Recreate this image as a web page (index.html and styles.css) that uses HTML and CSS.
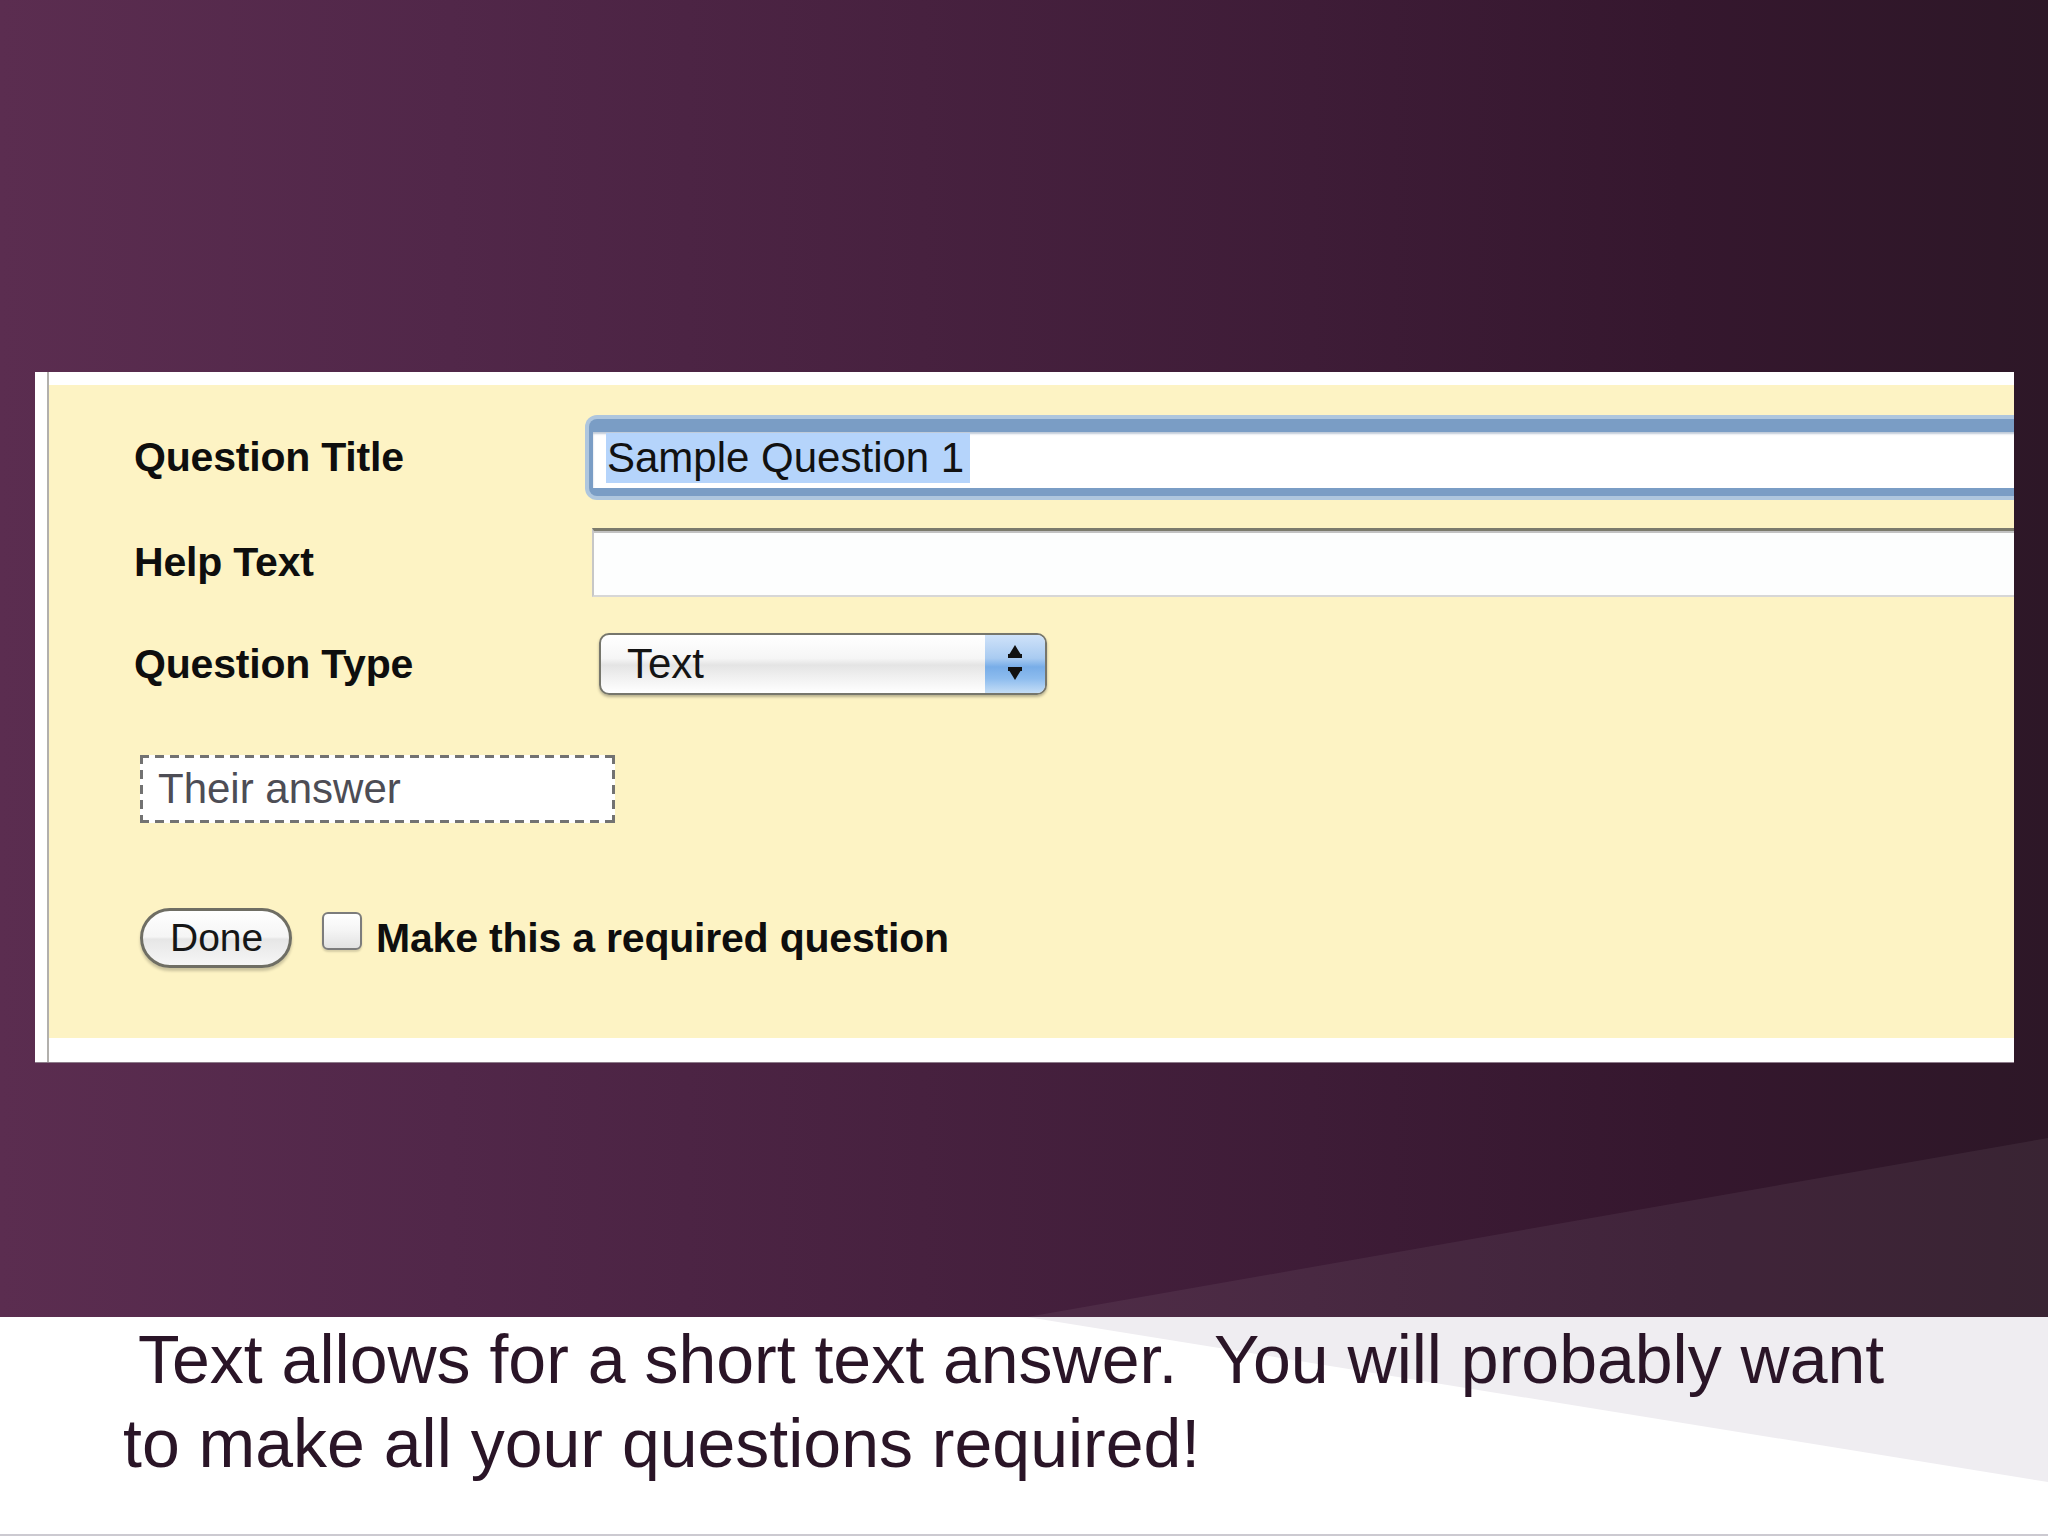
FILE: index.html
```html
<!DOCTYPE html>
<html>
<head>
<meta charset="utf-8">
<title>Question editor</title>
<link rel="stylesheet" href="styles.css">
</head>
<body>
<div class="slide">
  <div class="top">
    <div class="panel">
      <div class="sheet">
        <div class="editor">
          <div class="row row-title">
            <div class="label">Question Title</div>
            <div class="control">
              <div class="field field-focus"><span class="sel">Sample Question 1</span></div>
            </div>
          </div>
          <div class="row row-help">
            <div class="label">Help Text</div>
            <div class="control">
              <div class="field field-plain"></div>
            </div>
          </div>
          <div class="row row-type">
            <div class="label">Question Type</div>
            <div class="control">
              <div class="select">
                <span class="select-value">Text</span>
                <span class="select-arrows">
                  <svg width="60" height="58" viewBox="0 0 60 58" aria-hidden="true">
                    <polygon points="30,10 24.5,19 35.5,19" fill="#111"/>
                    <rect x="23" y="19" width="14" height="4" fill="#111"/>
                    <rect x="23" y="32" width="14" height="4" fill="#111"/>
                    <polygon points="24.5,36 35.5,36 30,45" fill="#111"/>
                  </svg>
                </span>
              </div>
            </div>
          </div>
          <div class="answer">Their answer</div>
          <div class="actions">
            <span class="btn">Done</span>
            <span class="checkbox"></span>
            <span class="req">Make this a required question</span>
          </div>
        </div>
      </div>
    </div>
  </div>
  <svg class="wedge" width="2048" height="1536" viewBox="0 0 2048 1536" aria-hidden="true">
    <polygon points="1027,1317 2048,1138 2048,1317" fill="#ffffff" fill-opacity="0.06"/>
    <polygon points="1027,1317 2048,1317 2048,1482" fill="#efedf1"/>
  </svg>
  <p class="caption">Text allows for a short text answer.&nbsp; You will probably want<br>to make all your questions required!</p>
</div>
</body>
</html>
```

FILE: styles.css
```css
html, body {
  margin: 0;
  padding: 0;
}

body {
  width: 2048px;
  height: 1536px;
  overflow: hidden;
  background: #ffffff;
  font-family: "Liberation Sans", Arial, sans-serif;
}

.slide {
  position: relative;
  width: 2048px;
  height: 1536px;
  background: #ffffff;
}

.top {
  height: 1317px;
  box-sizing: border-box;
  padding-top: 372px;
  background: linear-gradient(90deg, #5b2d50 0%, #512749 22%, #47213f 45%, #3e1c37 64%, #35172e 82%, #2d1727 100%);
}

.panel {
  margin-left: 35px;
  width: 1979px;
  height: 691px;
  box-sizing: border-box;
  padding-left: 12px;
  background: #ffffff;
  border-bottom: 1px solid #8d7b8a;
}

.sheet {
  height: 100%;
  box-sizing: border-box;
  border-left: 2px solid #b2b0ad;
  padding-top: 13px;
  padding-bottom: 24px;
}

.editor {
  height: 100%;
  box-sizing: border-box;
  background: #fdf3c4;
  overflow: hidden;
  padding: 34px 0 0 85px;
}

.row {
  display: flex;
  align-items: center;
}

.label {
  width: 458px;
  flex: none;
  font-size: 41px;
  font-weight: bold;
  letter-spacing: -0.2px;
  color: #0e0e0e;
}

.control {
  flex: 1;
  min-width: 0;
  display: flex;
}

.row-title {
  height: 77px;
}

.row-help {
  margin-top: 32px;
  height: 69px;
}

.row-type {
  margin-top: 36px;
  height: 62px;
}

.field {
  flex: 1;
  box-sizing: border-box;
  background: #ffffff;
  margin-right: -40px;
}

.field-focus {
  height: 77px;
  margin-left: -3px;
  border-style: solid;
  border-color: #7a9dc5;
  border-width: 13px 0 8px 4px;
  border-radius: 8px 0 0 8px;
  box-shadow: 0 0 0 4px #aec6de, inset 0 2px 2px rgba(70, 100, 140, 0.35);
  padding-left: 13px;
  display: flex;
  align-items: flex-start;
}

.sel {
  display: inline-block;
  margin-top: 1px;
  height: 50px;
  line-height: 50px;
  padding: 0 6px 0 1px;
  background: #b5d4fb;
  font-size: 42px;
  color: #111111;
  white-space: nowrap;
}

.field-plain {
  height: 69px;
  border-top: 3px solid #7b7a6c;
  border-left: 2px solid #c7c7c7;
  border-bottom: 2px solid #d7d7d7;
  box-shadow: inset 0 2px 0 #c2c2c2;
  background: #fdfefe;
}

.select {
  margin-left: 7px;
  width: 448px;
  height: 62px;
  box-sizing: border-box;
  display: flex;
  border: 2px solid #76766c;
  border-radius: 10px;
  overflow: hidden;
  background: linear-gradient(180deg, #ffffff 0%, #f6f6f6 40%, #e4e4e4 52%, #f0f0f0 72%, #ffffff 100%);
  box-shadow: 0 2px 3px rgba(0, 0, 0, 0.28);
}

.select-value {
  flex: 1;
  padding-left: 26px;
  font-size: 42px;
  line-height: 58px;
  color: #141414;
}

.select-arrows {
  width: 60px;
  flex: none;
  box-sizing: border-box;
  border-top: 2px solid #2c4a96;
  margin-top: -2px;
  height: 60px;
  background: linear-gradient(180deg, #cfe2f9 0%, #a9cbf1 40%, #78ade8 55%, #8dbcee 75%, #c4ddf6 100%);
  display: flex;
  align-items: flex-end;
}

.select-arrows svg {
  display: block;
}

.answer {
  margin-top: 60px;
  margin-left: 6px;
  width: 475px;
  height: 68px;
  box-sizing: border-box;
  padding-left: 18px;
  display: flex;
  align-items: center;
  font-size: 42px;
  color: #4d4d55;
  background:
    repeating-linear-gradient(90deg, #727272 0 9px, transparent 9px 15px) left top / 100% 3px no-repeat,
    repeating-linear-gradient(90deg, #727272 0 9px, transparent 9px 15px) left bottom / 100% 3px no-repeat,
    repeating-linear-gradient(180deg, #727272 0 9px, transparent 9px 15px) left top / 3px 100% no-repeat,
    repeating-linear-gradient(180deg, #727272 0 9px, transparent 9px 15px) right top / 3px 100% no-repeat,
    #ffffff;
}

.actions {
  margin-top: 85px;
  height: 60px;
  display: flex;
  align-items: flex-start;
}

.btn {
  margin-left: 6px;
  width: 152px;
  height: 60px;
  box-sizing: border-box;
  border: 3px solid #6f6e64;
  border-radius: 30px;
  padding-left: 27px;
  font-size: 39px;
  line-height: 54px;
  color: #161616;
  background: linear-gradient(180deg, #ffffff 0%, #f5f5f5 48%, #e6e6e6 52%, #f6f6f6 100%);
  box-shadow: 0 3px 3px rgba(0, 0, 0, 0.2);
}

.checkbox {
  margin-left: 30px;
  margin-top: 4px;
  width: 40px;
  height: 38px;
  box-sizing: border-box;
  border: 2px solid #7c7c7c;
  border-radius: 6px;
  background: linear-gradient(180deg, #ffffff 0%, #f4f4f4 50%, #e2e2e2 100%);
  box-shadow: 0 2px 2px rgba(0, 0, 0, 0.15);
}

.req {
  margin-left: 14px;
  font-size: 41px;
  font-weight: bold;
  letter-spacing: -0.2px;
  line-height: 60px;
  color: #0e0e0e;
  white-space: nowrap;
}

.wedge {
  position: absolute;
  left: 0;
  top: 0;
  pointer-events: none;
}

.caption {
  position: relative;
  margin: 0;
  height: 219px;
  box-sizing: border-box;
  padding-left: 123px;
  text-indent: 15px;
  border-bottom: 2px solid #cccad1;
  font-size: 68px;
  line-height: 84px;
  color: #2a1527;
}
```
